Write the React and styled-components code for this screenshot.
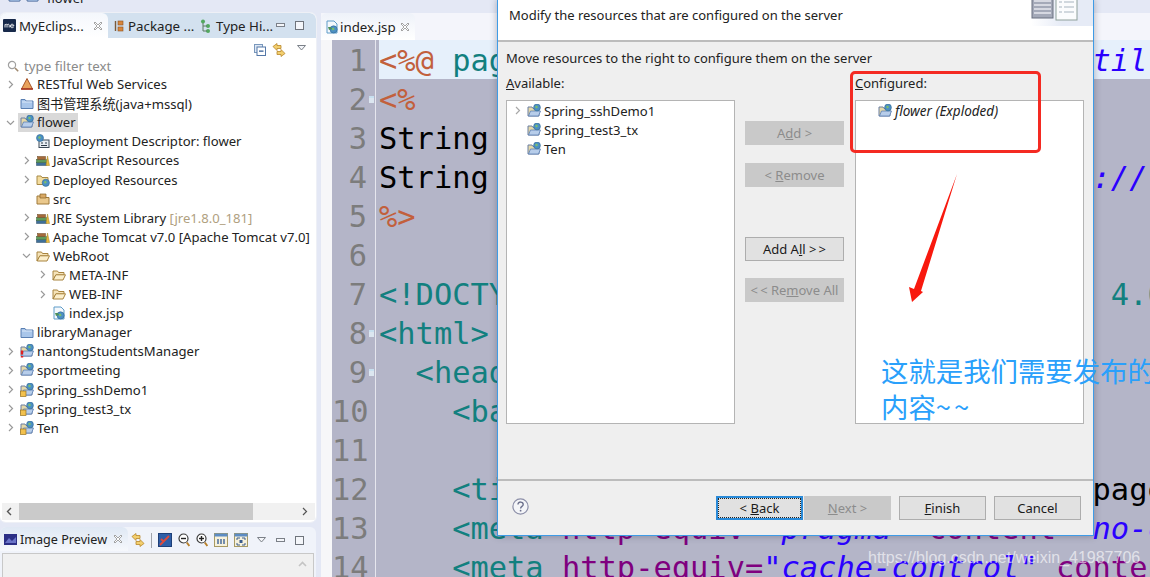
import React from "react";
import styled, { createGlobalStyle } from "styled-components";

const UI_FONT = `"Noto Sans", "Noto Sans CJK SC", sans-serif`;

const Global = createGlobalStyle`
  html, body { margin: 0; padding: 0; background: #e4e8f5; }
  * { box-sizing: border-box; }
`;

/* ---------- little drawn icons ---------- */
const Svg = ({ w = 14, h = 14, vb, children }) => (
  <svg width={w} height={h} viewBox={vb || `0 0 ${w} ${h}`} style={{ display: "block", flex: "none" }}>
    {children}
  </svg>
);

const Globe = ({ x = 9, y = 3, r = 3.4 }) => (
  <g>
    <circle cx={x} cy={y} r={r} fill="#4c8fc4" stroke="#2f6a94" strokeWidth="0.6" />
    <path d={`M${x - 2} ${y - 1}l2 -1 1 2 -2 1z`} fill="#7cc06a" />
  </g>
);

const BlueFolder = () => (
  <Svg>
    <path d="M1 3.5h4l1 1.5h7v7.5H1z" fill="#a9c6ea" stroke="#5a7fb2" />
    <path d="M2 6h10" stroke="#dbe8f8" />
  </Svg>
);
const OpenProject = ({ lock, error }) => (
  <Svg>
    <path d="M1 3h4l1 1.5h6V12H1z" fill="#e6d9a8" stroke="#6a7fa2" />
    <path d="M1.5 12l2-5h10l-2 5z" fill="#b7cdea" stroke="#5a7fb2" strokeWidth="0.8" />
    <Globe x={10} y={3.5} />
    {lock && <rect x="0.5" y="8" width="5.5" height="5.5" fill="#f2c14e" stroke="#9a7420" strokeWidth="0.7" />}
    {error && <path d="M2 6.5v4M2 12v1.5" stroke="#e02020" strokeWidth="2.4" />}
  </Svg>
);
const RestIcon = () => (
  <Svg>
    <path d="M7 1.5L12.5 12H1.5z" fill="#e8a25c" stroke="#a8562a" />
    <path d="M1 12h12" stroke="#a8331f" strokeWidth="1.6" />
  </Svg>
);
const Descriptor = () => (
  <Svg>
    <rect x="3" y="6" width="10" height="7.5" fill="#e8eef4" stroke="#3c4a58" />
    <path d="M5 9h2M9 9h2M5 11.5h6" stroke="#2c3a48" />
    <Globe x={4} y={4} r={3.5} />
  </Svg>
);
const Books = () => (
  <Svg>
    <rect x="0.5" y="9.5" width="10" height="3" fill="#3f6f98" stroke="#2a4a66" strokeWidth="0.5" />
    <rect x="0.5" y="6.5" width="10" height="3" fill="#5f9a5a" stroke="#3a6a38" strokeWidth="0.5" />
    <rect x="1.5" y="3.5" width="8" height="3" fill="#a56a3a" stroke="#6a4420" strokeWidth="0.5" />
    <path d="M10 12.5L11.5 3l2 9.5z" fill="#e8bb3e" stroke="#a07e20" strokeWidth="0.5" />
  </Svg>
);
const Deployed = () => (
  <Svg>
    <path d="M1 3h4l1 1.5h6v7H1z" fill="#f3dc9e" stroke="#a88a46" />
    <Globe x={9.8} y={9.8} r={3.6} />
  </Svg>
);
const SrcFolder = () => (
  <Svg>
    <path d="M1 4h4l1 1.5h7V12H1z" fill="#eac88c" stroke="#a07a3a" />
    <path d="M4 2h6v4H4z" fill="#d8a864" stroke="#8a6428" strokeWidth="0.7" />
  </Svg>
);
const TanFolder = () => (
  <Svg>
    <path d="M1 3h4.5l1 1.5H12V7H4L1 12z" fill="#f5e3b8" stroke="#a8843e" />
    <path d="M1.2 12l2.6-5.2h9.7L11 12z" fill="#fbeecb" stroke="#a8843e" />
  </Svg>
);
const JspIcon = () => (
  <Svg>
    <path d="M2 1h7l3 3v9H2z" fill="#f4f8fc" stroke="#5e9cc8" />
    <Globe x={8.6} y={9.4} r={3.6} />
    <path d="M3 7h3l1 2-3 1z" fill="#4c8f58" />
  </Svg>
);
const ICONS = {
  rest: RestIcon,
  closed: BlueFolder,
  open: () => <OpenProject />,
  lock: () => <OpenProject lock />,
  error: () => <OpenProject error />,
  desc: Descriptor,
  books: Books,
  deployed: Deployed,
  src: SrcFolder,
  tan: TanFolder,
  jsp: JspIcon,
};

const Chevron = ({ open, color = "#9a9a9a" }) => (
  <Svg w={9} h={9}>
    <path d={open ? "M1 3l3.5 3.5L8 3" : "M3 1l3.5 3.5L3 8"} fill="none" stroke={color} strokeWidth="1.2" />
  </Svg>
);
const ChevronLeft = ({ color = "#555" }) => (
  <Svg w={9} h={9}>
    <path d="M6 1L2.5 4.5 6 8" fill="none" stroke={color} strokeWidth="1.4" />
  </Svg>
);
const CloseX = () => (
  <Svg w={10} h={10}>
    <path d="M2 1l3 3 3-3 1 1-3 3 3 3-1 1-3-3-3 3-1-1 3-3-3-3z" fill="#fff" stroke="#8e8e8e" strokeWidth="0.8" />
  </Svg>
);
const MinIcon = () => (
  <Svg w={9} h={5}>
    <rect x="0.5" y="0.5" width="8" height="3" fill="#f4f6fa" stroke="#7b8088" />
  </Svg>
);
const MaxIcon = () => (
  <Svg w={9} h={9}>
    <rect x="0.5" y="0.5" width="8" height="8" fill="#f4f6fa" stroke="#6f747c" />
  </Svg>
);
const DownTri = () => (
  <Svg w={9} h={6}>
    <path d="M0.5 0.5h8L4.5 5z" fill="#f4f6fa" stroke="#7b8088" />
  </Svg>
);
const SyncIcon = () => (
  <Svg>
    <path d="M1 3.5L5 0.5v2h4v3H5v2z" fill="#f3cf6e" stroke="#b8862a" strokeWidth="0.8" />
    <path d="M13 10.5L9 13.5v-2H5v-3h4v-2z" fill="#f3cf6e" stroke="#b8862a" strokeWidth="0.8" />
  </Svg>
);
const CollapseIcon = () => (
  <Svg w={12} h={12}>
    <rect x="0.5" y="0.5" width="8" height="8" fill="#dfe8f4" stroke="#7a98bc" />
    <rect x="3" y="3" width="8.5" height="8.5" fill="#fff" stroke="#5578a8" />
    <path d="M5 7.2h4.5" stroke="#2f5a94" strokeWidth="1.3" />
  </Svg>
);
const SearchIcon = () => (
  <Svg w={12} h={12}>
    <circle cx="5" cy="5" r="3.6" fill="#fff" stroke="#a0a0a0" strokeWidth="1.2" />
    <path d="M8 8l3.2 3.2" stroke="#a08a70" strokeWidth="1.6" />
  </Svg>
);
const MeLogo = () => (
  <Svg w={13} h={13}>
    <rect width="13" height="13" rx="1" fill="#17294a" />
    <path d="M2 8.5V5.4M2 6c1-1.2 2-.8 2 .2v2.3M4 6c1-1.2 2.2-.8 2.2.2v2.3" fill="none" stroke="#fff" strokeWidth="0.9" />
    <path d="M7.4 6.9h3.4c0-2.2-3.4-2.2-3.4 0s2 2 3.2 1.3" fill="none" stroke="#fff" strokeWidth="0.9" />
  </Svg>
);
const PackageIcon = () => (
  <Svg w={10} h={12}>
    <path d="M1.5 1v10" stroke="#7a5a3a" strokeWidth="1.4" />
    <rect x="4" y="1" width="5" height="4" fill="#d8863c" stroke="#8a5020" strokeWidth="0.6" />
    <rect x="4" y="7" width="5" height="4" fill="#d8863c" stroke="#8a5020" strokeWidth="0.6" />
  </Svg>
);
const HierarchyIcon = () => (
  <Svg w={11} h={14}>
    <circle cx="3" cy="2.5" r="2" fill="#52a85e" />
    <circle cx="8" cy="7" r="2" fill="#52a85e" />
    <circle cx="8" cy="12" r="2" fill="#52a85e" />
    <path d="M3 4v8h4M3 7h4" fill="none" stroke="#5a7a60" />
  </Svg>
);
const ImagePreviewIcon = () => (
  <Svg w={13} h={11}>
    <rect width="13" height="11" fill="#2b2f86" />
    <path d="M1 9l4-5 3 3 4-4v6z" fill="#6a74c8" />
  </Svg>
);
const ToolSquare = ({ kind }) => (
  <Svg>
    <rect x="0.5" y="0.5" width="13" height="13" fill={kind === "pic" ? "#2f5fa8" : "#f6f1dc"} stroke={kind === "pic" ? "#1e3f78" : "#a89a62"} />
    {kind === "pic" && <path d="M2 12L11 3M3 6l3 3" stroke="#e04a3a" strokeWidth="1.8" />}
    {kind !== "pic" && <rect x="0.5" y="0.5" width="13" height="3" fill="#5c8cc4" />}
    {kind === "a" && <path d="M4 6v5M7 6v5M10 6v5" stroke="#4a6c9c" strokeWidth="1.5" />}
    {kind === "b" && <path d="M3 5h3M8 5h3M3 12h3M8 12h3M3 5v2M11 5v2M3 10v2M11 10v2" stroke="#3a5c8c" />}
    {kind === "b" && <rect x="5.5" y="7" width="3" height="3" fill="#3a5c8c" />}
  </Svg>
);
const ZoomIcon = ({ plus }) => (
  <Svg w={12} h={14}>
    <circle cx="5.5" cy="5.5" r="4.5" fill="#fff" stroke="#3c3c3c" strokeWidth="1.2" />
    <path d="M3 5.5h5" stroke="#222" strokeWidth="1.4" />
    {plus && <path d="M5.5 3v5" stroke="#222" strokeWidth="1.4" />}
    <path d="M8.8 9.5l2.6 3.5" stroke="#b8802a" strokeWidth="2" />
  </Svg>
);
const HelpIcon = () => (
  <Svg w={17} h={17}>
    <circle cx="8.5" cy="8.5" r="7.6" fill="#f4f5f8" stroke="#8c8fa8" strokeWidth="1.2" />
    <path d="M6 6.4c0-3.2 5.2-3 5.2 0 0 2-2.6 1.9-2.6 4" fill="none" stroke="#6c708c" strokeWidth="1.4" />
    <circle cx="8.6" cy="12.7" r="0.9" fill="#6c708c" />
  </Svg>
);
const ServerBanner = () => (
  <Svg w={50} h={26}>
    <rect x="1" y="-3" width="21" height="21" fill="#a4a9b8" stroke="#6a7080" />
    <path d="M3 1h17M3 5h17M3 9h17M3 13h17" stroke="#e6e8ee" strokeWidth="1.4" />
    <rect x="25" y="-3" width="21" height="23" fill="#fbfcfd" stroke="#8ea09a" />
    <path d="M28 2h3M33 2h10M28 7h3M33 7h10M28 12h3M33 12h10" stroke="#c4ccd4" strokeWidth="1.4" />
  </Svg>
);

/* ---------- page frame ---------- */
const Page = styled.div`
  position: relative;
  width: 1150px;
  height: 577px;
  overflow: hidden;
  background: #e4e8f5;
  font-family: ${UI_FONT};
  font-size: 13px;
  color: #222;
  display: flex;
  flex-direction: column;
`;
const Crumbs = styled.div`
  height: 13px;
  flex: none;
  overflow: hidden;
  display: flex;
  gap: 4px;
  padding-left: 8px;
  line-height: 18px;
`;
const CrumbIcon = styled.span`
  margin-top: -11px;
  margin-right: ${(p) => p.$right || 0}px;
`;
const CrumbText = styled.span`
  display: block;
  margin-top: -11px;
`;
const Workbench = styled.div`
  flex: 1;
  min-height: 0;
  display: grid;
  grid-template-columns: 316px 1fr;
  column-gap: 5px;
`;
const LeftCol = styled.div`
  display: flex;
  flex-direction: column;
  gap: 5px;
`;

/* ---------- explorer ---------- */
const Explorer = styled.section`
  height: 509px;
  flex: none;
  background: #fff;
  border-radius: 6px;
  overflow: hidden;
  display: flex;
  flex-direction: column;
  box-shadow: 0 0 0 1px #eef0f6;
`;
const TabStrip = styled.div`
  height: 25px;
  flex: none;
  display: flex;
  align-items: stretch;
  background: ${(p) => p.$bg || "#d3e1ef"};
  border-radius: 6px 6px 0 0;
`;
const Tab = styled.div`
  display: flex;
  align-items: center;
  width: ${(p) => p.$w}px;
  flex: none;
  padding-left: ${(p) => p.$pad || 3}px;
  gap: ${(p) => p.$gap || 3}px;
  background: ${(p) => (p.$active ? "linear-gradient(#f4f7fc, #fff)" : "transparent")};
  border-radius: ${(p) => (p.$active ? "6px 6px 0 0" : "0")};
  white-space: nowrap;
  font-size: 13.3px;
`;
const TabClose = styled.span`
  margin-left: auto;
  margin-right: ${(p) => p.$r || 6}px;
  display: flex;
`;
const StripTools = styled.div`
  margin-left: auto;
  display: flex;
  align-items: center;
  gap: 10px;
  padding-right: 12px;
`;
const ViewToolbar = styled.div`
  height: 19px;
  flex: none;
  display: flex;
  align-items: center;
  padding: 4px 0 0 254px;
  gap: 6px;
`;
const TriSlot = styled.span`
  margin-left: 5px;
  margin-top: -3px;
  display: flex;
`;
const FilterRow = styled.div`
  height: 17.5px;
  flex: none;
  display: flex;
  align-items: center;
  padding: 1px 0 0 7px;
  gap: 5px;
  color: #8a8a8a;
  font-size: 13.3px;
`;
const Tree = styled.div`
  flex: 1;
  min-height: 0;
  overflow: hidden;
`;
const TreeRow = styled.div`
  height: 19.1px;
  display: flex;
  align-items: center;
  padding-left: ${(p) => 6 + p.$depth * 16}px;
  white-space: nowrap;
  font-size: 13.1px;
`;
const ChevSlot = styled.span`
  width: 14px;
  flex: none;
  display: flex;
`;
const IconSlot = styled.span`
  width: 17px;
  flex: none;
  display: flex;
`;
const Selected = styled.span`
  display: flex;
  align-items: center;
  height: 19px;
  background: ${(p) => (p.$on ? "#d9d9d9" : "transparent")};
  margin-left: ${(p) => (p.$on ? "-2px" : "0")};
  padding-left: ${(p) => (p.$on ? "2px" : "0")};
  padding-right: ${(p) => (p.$on ? "2px" : "0")};
`;
const Decor = styled.span`
  color: #b0a080;
`;
const HScroll = styled.div`
  height: 17px;
  flex: none;
  margin: 0 1px 2px 2px;
  background: #f1f1f1;
  display: flex;
  align-items: center;
  padding: 0 6px 0 3px;
`;
const ScrollThumb = styled.div`
  height: 100%;
  width: 234px;
  margin-left: 5px;
  background: #cacaca;
`;
const ScrollEnd = styled.span`
  margin-left: auto;
  display: flex;
`;

/* ---------- image preview ---------- */
const Preview = styled.section`
  flex: 1;
  min-height: 0;
  background: #f0f3fa;
  border-radius: 6px 6px 0 0;
  display: flex;
  flex-direction: column;
`;
const PreviewBar = styled.div`
  height: 26px;
  flex: none;
  display: flex;
  align-items: center;
`;
const PreviewTab = styled.div`
  width: 128px;
  height: 24px;
  align-self: flex-start;
  display: flex;
  align-items: center;
  gap: 3px;
  padding-left: 4px;
  border-radius: 6px 6px 0 0;
  background: linear-gradient(#dfe8f4, #f6f8fc);
  font-size: 12.6px;
  white-space: nowrap;
`;
const PreviewTools = styled.div`
  display: flex;
  align-items: center;
  padding-left: 3px;
  gap: 6px;
`;
const ToolSep = styled.span`
  width: 1px;
  height: 15px;
  background: #a0a4ac;
`;
const PreviewBody = styled.div`
  flex: 1;
  margin: 0 2px;
  background: #f0f0f0;
  border: 1px solid #c8c8c8;
  border-bottom: 0;
  display: flex;
  justify-content: flex-end;
  padding: 7px 6px 0 0;
`;

/* ---------- editor ---------- */
const Editor = styled.section`
  display: flex;
  flex-direction: column;
  min-width: 0;
  position: relative;
`;
const EditorTabs = styled.div`
  height: 27px;
  flex: none;
  background: #f4f5fb;
  display: flex;
  align-items: stretch;
`;
const EditorTab = styled.div`
  width: 94px;
  display: flex;
  align-items: center;
  gap: 1px;
  padding-left: 4px;
  border-radius: 6px 6px 0 0;
  background: linear-gradient(#eef2f9, #fff);
  font-size: 13.3px;
`;
const EditorBody = styled.div`
  flex: 1;
  min-height: 0;
  display: flex;
  background: #b4b5c8;
  overflow: hidden;
  font-family: "DejaVu Sans Mono", monospace;
  font-size: 30.4px;
  line-height: 41px;
`;
const Margin = styled.div`
  width: 11px;
  flex: none;
  background: #f7f7f9;
`;
const Gutter = styled.div`
  width: 44px;
  flex: none;
  border-right: 1px solid #e6e6ee;
  color: #7c7c7c;
  text-align: right;
  padding-right: 8px;
`;
const GutterLine = styled.div`
  height: 39px;
  position: relative;
  ${(p) =>
    p.$fold &&
    `&::after {
      content: "";
      position: absolute;
      right: -7px;
      top: 17px;
      width: 5px;
      height: 5px;
      background: #dce6f0;
      border-top: 2px solid #c8e0f0;
    }`}
`;
const Code = styled.div`
  flex: 1;
  min-width: 0;
  margin-left: 3px;
`;
const CodeLine = styled.div`
  height: 39px;
  white-space: pre;
  background: ${(p) => (p.$current ? "#e6f0fb" : "transparent")};
`;
const COLORS = { tag: "#12807f", jsp: "#c2603c", attr: "#7f007f", str: "#2a00ff", plain: "#000" };
const Tk = styled.span`
  color: ${(p) => COLORS[p.$k]};
  font-style: ${(p) => (p.$k === "str" ? "italic" : "normal")};
`;
const BottomScroll = styled.div`
  position: absolute;
  left: 0;
  right: 0;
  bottom: 0;
  height: 7px;
  background: #f4f4f4;
  display: flex;
  padding-left: 60px;
  overflow: hidden;
`;
const BottomThumb = styled.div`
  margin-left: 5px;
  width: 410px;
  background: #cdcdcd;
`;

/* ---------- wizard dialog ---------- */
const Dialog = styled.div`
  position: absolute;
  left: 497px;
  top: -1px;
  width: 597px;
  height: 537px;
  background: #efefef;
  border: 1px solid #3f9be6;
  box-shadow: 0 0 7px rgba(40, 40, 60, 0.35);
  display: flex;
  flex-direction: column;
`;
const DialogHead = styled.div`
  height: 42px;
  flex: none;
  background: #fff;
  border-bottom: 2px solid #bcbcbc;
  display: flex;
  align-items: flex-start;
  justify-content: space-between;
  padding: 6px 0 0 11px;
  font-size: 13px;
`;
const Banner = styled.div`
  width: 62px;
  height: 26px;
  margin-top: -6px;
  background: linear-gradient(90deg, #fff, #e6ebf6 50%);
`;
const DialogBody = styled.div`
  flex: 1;
  min-height: 0;
  padding: 7px 9px 0 8px;
`;
const Hint = styled.div`
  height: 18px;
  line-height: 18px;
  font-size: 13px;
`;
const Columns = styled.div`
  display: grid;
  grid-template-columns: 229px 120px 229px;
  margin-top: 8px;
`;
const ListCol = styled.div`
  display: flex;
  flex-direction: column;
`;
const ListLabel = styled.div`
  height: 17px;
  line-height: 17px;
  margin-bottom: 8px;
  font-size: 13px;
`;
const ListBox = styled.div`
  height: 324px;
  background: #fff;
  border: 1px solid #b4b4b4;
`;
const ListRow = styled.div`
  height: 19px;
  display: flex;
  align-items: center;
  padding-left: ${(p) => p.$pad}px;
  font-size: ${(p) => (p.$italic ? "13.5px" : "13.1px")};
  font-style: ${(p) => (p.$italic ? "italic" : "normal")};
  white-space: nowrap;
`;
const ActionCol = styled.div`
  padding: 46px 0 0 10px;
  display: flex;
  flex-direction: column;
`;
const Btn = styled.div`
  width: ${(p) => p.$w || 99}px;
  height: 24px;
  flex: none;
  margin-top: ${(p) => p.$top || 0}px;
  display: flex;
  align-items: center;
  justify-content: center;
  font-size: 13px;
  white-space: nowrap;
  color: ${(p) => (p.$off ? "#8c8c8c" : "#1a1a1a")};
  background: ${(p) => (p.$off ? "#c9c9c9" : "#e1e1e1")};
  border: 1px solid ${(p) => (p.$off ? "#c9c9c9" : "#adadad")};
  ${(p) =>
    p.$focus &&
    `border: 2px solid #2a8ad8;
     outline: 1px dotted #222;
     outline-offset: -3px;`}
`;
const DialogFoot = styled.div`
  height: 56px;
  flex: none;
  border-top: 2px solid #bcbcbc;
  display: flex;
  align-items: flex-start;
  padding: 15px 12px 0 14px;
`;
const HelpSlot = styled.div`
  margin-top: 2px;
  margin-right: auto;
`;
const FootGroup = styled.div`
  display: flex;
  gap: ${(p) => p.$gap}px;
  margin-left: ${(p) => p.$left || 0}px;
`;

/* ---------- annotations over the picture ---------- */
const RedBox = styled.div`
  position: absolute;
  left: 850px;
  top: 71px;
  width: 191px;
  height: 82px;
  border: 3px solid #f42a22;
  border-radius: 5px;
`;
const ArrowLayer = styled.svg`
  position: absolute;
  left: 900px;
  top: 170px;
  width: 70px;
  height: 140px;
`;
const Note = styled.div`
  position: absolute;
  left: 881px;
  top: 352px;
  width: 300px;
  font-family: "Noto Sans CJK SC", sans-serif;
  font-size: 27.4px;
  line-height: 36px;
  color: #2aa0fb;
  white-space: pre;
`;
const NoteTail = styled.span`
  letter-spacing: 3px;
`;
const Watermark = styled.div`
  position: absolute;
  left: 868px;
  top: 548px;
  font-family: "Liberation Sans", sans-serif;
  font-size: 16px;
  line-height: 20px;
  color: rgba(255, 255, 255, 0.62);
  white-space: nowrap;
`;

/* ---------- data ---------- */
const TREE = [
  { d: 0, chev: "r", icon: "rest", text: "RESTful Web Services" },
  { d: 0, icon: "closed", text: "图书管理系统(java+mssql)" },
  { d: 0, chev: "o", icon: "open", text: "flower", selected: true },
  { d: 1, icon: "desc", text: "Deployment Descriptor: flower" },
  { d: 1, chev: "r", icon: "books", text: "JavaScript Resources" },
  { d: 1, chev: "r", icon: "deployed", text: "Deployed Resources" },
  { d: 1, icon: "src", text: "src" },
  { d: 1, chev: "r", icon: "books", text: "JRE System Library", decor: "[jre1.8.0_181]" },
  { d: 1, chev: "r", icon: "books", text: "Apache Tomcat v7.0 [Apache Tomcat v7.0]" },
  { d: 1, chev: "o", icon: "tan", text: "WebRoot" },
  { d: 2, chev: "r", icon: "tan", text: "META-INF" },
  { d: 2, chev: "r", icon: "tan", text: "WEB-INF" },
  { d: 2, icon: "jsp", text: "index.jsp" },
  { d: 0, icon: "closed", text: "libraryManager" },
  { d: 0, chev: "r", icon: "error", text: "nantongStudentsManager" },
  { d: 0, chev: "r", icon: "open", text: "sportmeeting" },
  { d: 0, chev: "r", icon: "lock", text: "Spring_sshDemo1" },
  { d: 0, chev: "r", icon: "lock", text: "Spring_test3_tx" },
  { d: 0, chev: "r", icon: "lock", text: "Ten" },
];

const CODE = [
  [["jsp", "<%@ "], ["tag", "page "], ["attr", "language="], ["str", "\"java\" "], ["attr", "import="], ["str", "\"java.util.*\""]],
  [["jsp", "<%"]],
  [["plain", "String path = request.getContextPath();"]],
  [["plain", "String basePath = request.getScheme()+"], ["str", "\"://\""]],
  [["jsp", "%>"]],
  [],
  [["tag", "<!DOCTYPE HTML PUBLIC \"-//W3C//DTD HTML 4.01 Transitional//EN\">"]],
  [["tag", "<html>"]],
  [["tag", "  <head>"]],
  [["tag", "    <base href=\"\">"]],
  [],
  [["tag", "    <title>"], ["plain", "My JSP 'index.jsp' starting page"]],
  [["tag", "    <meta "], ["attr", "http-equiv="], ["str", "\"pragma\" "], ["attr", "content="], ["str", "\"no-cache\""]],
  [["tag", "    <meta "], ["attr", "http-equiv="], ["str", "\"cache-control\" "], ["attr", "content="]],
];
const FOLDS = [2, 8, 9];

export default function App() {
  return (
    <Page>
      <Global />
      <Crumbs>
        <CrumbIcon><OpenProject /></CrumbIcon>
        <CrumbIcon $right={3}><OpenProject /></CrumbIcon>
        <CrumbText>flower</CrumbText>
      </Crumbs>
      <Workbench>
        <LeftCol>
          <Explorer>
            <TabStrip>
              <Tab $active $w={108}>
                <MeLogo />
                <span>MyEclips...</span>
                <TabClose $r={5}><CloseX /></TabClose>
              </Tab>
              <Tab $w={85} $pad={6} $gap={4}>
                <PackageIcon />
                <span>Package ...</span>
              </Tab>
              <Tab $w={74} $pad={7} $gap={5}>
                <HierarchyIcon />
                <span>Type Hi...</span>
              </Tab>
              <StripTools>
                <MinIcon />
                <MaxIcon />
              </StripTools>
            </TabStrip>
            <ViewToolbar>
              <CollapseIcon />
              <SyncIcon />
              <TriSlot><DownTri /></TriSlot>
            </ViewToolbar>
            <FilterRow>
              <SearchIcon />
              <span>type filter text</span>
            </FilterRow>
            <Tree>
              {TREE.map((n) => {
                const Icon = ICONS[n.icon];
                return (
                  <TreeRow key={n.text} $depth={n.d}>
                    <ChevSlot>{n.chev && <Chevron open={n.chev === "o"} />}</ChevSlot>
                    <Selected $on={n.selected}>
                      <IconSlot><Icon /></IconSlot>
                      <span>{n.text}</span>
                    </Selected>
                    {n.decor && <Decor>&nbsp;{n.decor}</Decor>}
                  </TreeRow>
                );
              })}
            </Tree>
            <HScroll>
              <ChevronLeft />
              <ScrollThumb />
              <ScrollEnd><Chevron color="#555" /></ScrollEnd>
            </HScroll>
          </Explorer>
          <Preview>
            <PreviewBar>
              <PreviewTab>
                <ImagePreviewIcon />
                <span>Image Preview</span>
                <TabClose $r={5}><CloseX /></TabClose>
              </PreviewTab>
              <PreviewTools>
                <SyncIcon />
                <ToolSep />
                <ToolSquare kind="pic" />
                <ZoomIcon />
                <ZoomIcon plus />
                <ToolSquare kind="a" />
                <ToolSquare kind="b" />
              </PreviewTools>
              <StripTools>
                <DownTri />
                <MinIcon />
                <MaxIcon />
              </StripTools>
            </PreviewBar>
            <PreviewBody>
              <Svg w={9} h={6}>
                <path d="M1 5l3.5-3.5L8 5" fill="none" stroke="#c4c4c4" strokeWidth="1.6" />
              </Svg>
            </PreviewBody>
          </Preview>
        </LeftCol>

        <Editor>
          <EditorTabs>
            <EditorTab>
              <JspIcon />
              <span>index.jsp</span>
              <TabClose $r={5}><CloseX /></TabClose>
            </EditorTab>
          </EditorTabs>
          <EditorBody>
            <Margin />
            <Gutter>
              {CODE.map((_, i) => (
                <GutterLine key={i} $fold={FOLDS.includes(i + 1)}>{i + 1}</GutterLine>
              ))}
            </Gutter>
            <Code>
              {CODE.map((line, i) => (
                <CodeLine key={i} $current={i === 0}>
                  {line.map(([k, t], j) => (
                    <Tk key={j} $k={k}>{t}</Tk>
                  ))}
                </CodeLine>
              ))}
            </Code>
          </EditorBody>
          <BottomScroll>
            <ChevronLeft color="#666" />
            <BottomThumb />
          </BottomScroll>
        </Editor>
      </Workbench>

      <Dialog>
        <DialogHead>
          <span>Modify the resources that are configured on the server</span>
          <Banner><ServerBanner /></Banner>
        </DialogHead>
        <DialogBody>
          <Hint>Move resources to the right to configure them on the server</Hint>
          <Columns>
            <ListCol>
              <ListLabel><u>A</u>vailable:</ListLabel>
              <ListBox>
                <ListRow $pad={6}>
                  <ChevSlot><Chevron color="#a8a8a8" /></ChevSlot>
                  <IconSlot><OpenProject /></IconSlot>
                  <span>Spring_sshDemo1</span>
                </ListRow>
                <ListRow $pad={20}>
                  <IconSlot><OpenProject /></IconSlot>
                  <span>Spring_test3_tx</span>
                </ListRow>
                <ListRow $pad={20}>
                  <IconSlot><OpenProject /></IconSlot>
                  <span>Ten</span>
                </ListRow>
              </ListBox>
            </ListCol>
            <ActionCol>
              <Btn $off><span>A<u>d</u>d &gt;</span></Btn>
              <Btn $off $top={18}><span>&lt; <u>R</u>emove</span></Btn>
              <Btn $top={50}><span>Add A<u>l</u>l &gt;&#8201;&gt;</span></Btn>
              <Btn $off $top={17}><span>&lt;&#8201;&lt; Re<u>m</u>ove All</span></Btn>
            </ActionCol>
            <ListCol>
              <ListLabel><u>C</u>onfigured:</ListLabel>
              <ListBox>
                <ListRow $pad={22} $italic>
                  <IconSlot><OpenProject /></IconSlot>
                  <span>flower (Exploded)</span>
                </ListRow>
              </ListBox>
            </ListCol>
          </Columns>
        </DialogBody>
        <DialogFoot>
          <HelpSlot><HelpIcon /></HelpSlot>
          <FootGroup $gap={1}>
            <Btn $w={87} $focus><span>&lt; <u>B</u>ack</span></Btn>
            <Btn $w={87} $off><span><u>N</u>ext &gt;</span></Btn>
          </FootGroup>
          <FootGroup $gap={8} $left={8}>
            <Btn $w={87}><span><u>F</u>inish</span></Btn>
            <Btn $w={87}>Cancel</Btn>
          </FootGroup>
        </DialogFoot>
      </Dialog>

      <RedBox />
      <ArrowLayer viewBox="900 170 70 140">
        <path d="M957 174L921 291L923 292L912 302L909 287L914 289Z" fill="#f8190e" />
      </ArrowLayer>
      <Note>{"这就是我们需要发布的\n内容"}<NoteTail>~~</NoteTail></Note>
      <Watermark>https://blog.csdn.net/weixin_41987706</Watermark>
    </Page>
  );
}
